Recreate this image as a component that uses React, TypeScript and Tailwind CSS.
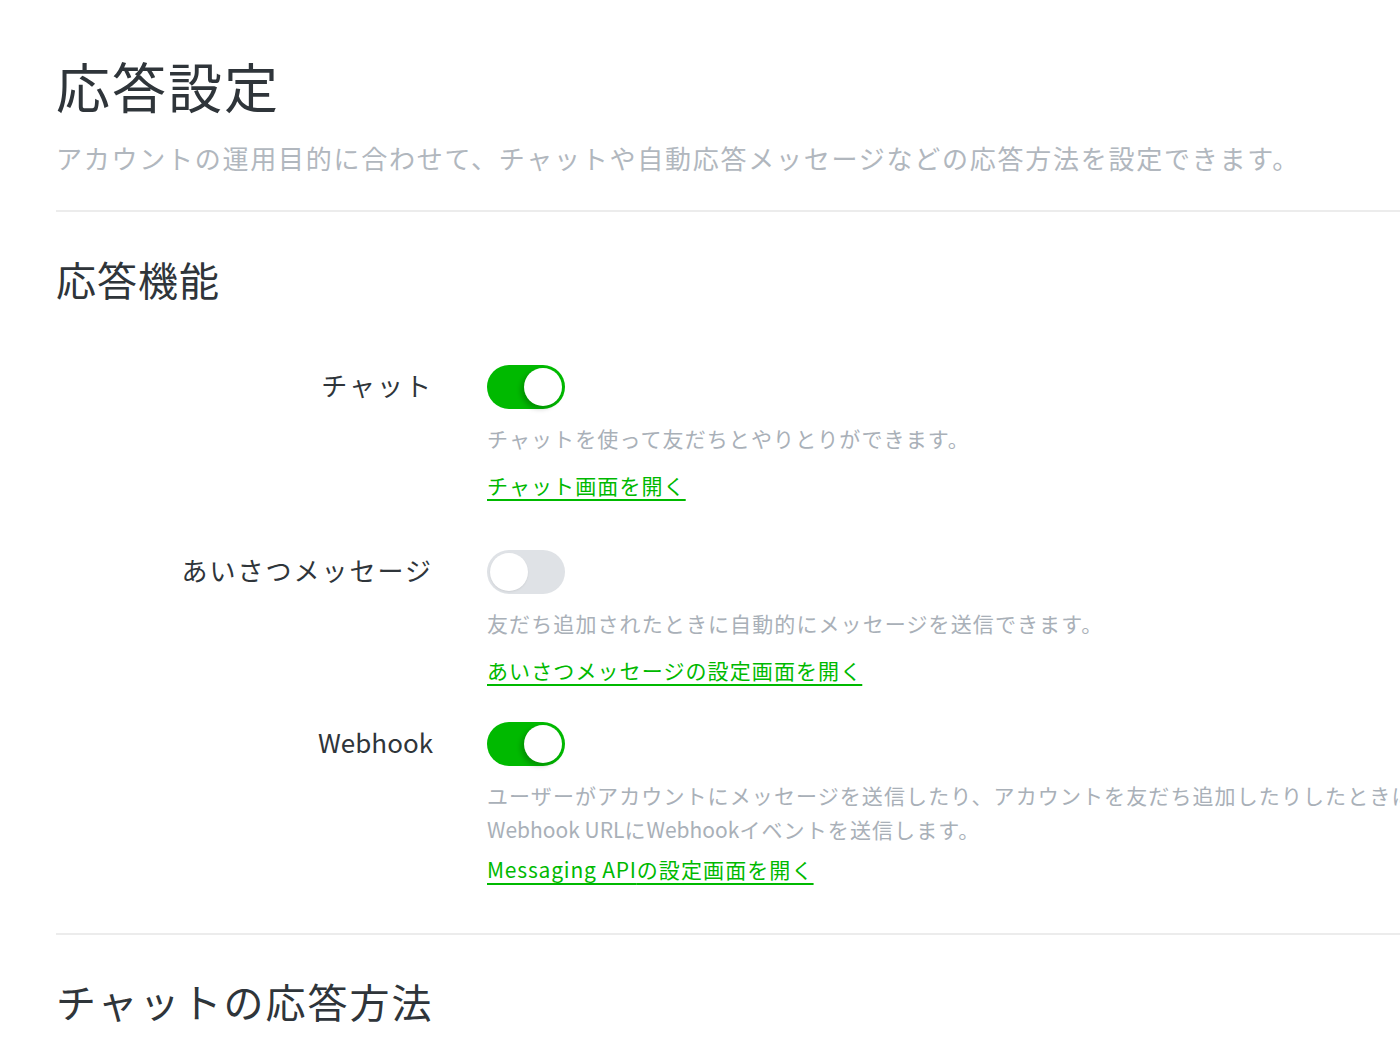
import React, { useState } from "react";

const font = {
  fontFamily: '"Noto Sans CJK JP", "Noto Sans", sans-serif',
};

type Feature = {
  label: string;
  labelClass: string;
  on: boolean;
  desc: React.ReactNode;
  link: React.ReactNode;
  rowClass: string;
  linkClass: string;
};

const Toggle = ({ on, onClick }: { on: boolean; onClick: () => void }) => (
  <button
    onClick={onClick}
    className={`relative block w-[78px] h-[44px] rounded-full transition-colors ${
      on ? "bg-[#00b900]" : "bg-[#dfe2e6]"
    }`}
    aria-pressed={on}
  >
    <span
      className={`absolute top-[3px] w-[38px] h-[38px] rounded-full bg-white transition-all ${
        on
          ? "left-[37px] shadow-[-3px_3px_5px_rgba(0,0,0,0.22)]"
          : "left-[3px] shadow-[0_1px_2px_rgba(0,0,0,0.08)]"
      }`}
    />
  </button>
);

const App = () => {
  const [features, setFeatures] = useState<Feature[]>([
    {
      label: "チャット",
      labelClass: "tracking-[2px]",
      on: true,
      desc: "チャットを使って友だちとやりとりができます。",
      link: "チャット画面を開く",
      rowClass: "mb-[48px]",
      linkClass: "mt-[13px]",
    },
    {
      label: "あいさつメッセージ",
      labelClass: "tracking-[2px]",
      on: false,
      desc: "友だち追加されたときに自動的にメッセージを送信できます。",
      link: "あいさつメッセージの設定画面を開く",
      rowClass: "mb-[35px]",
      linkClass: "mt-[13px]",
    },
    {
      label: "Webhook",
      labelClass: "tracking-normal",
      on: true,
      desc: (
        <>
          ユーザーがアカウントにメッセージを送信したり、アカウントを友だち追加したりしたときに、
          <br />
          <span className="tracking-normal">Webhook URL</span>に
          <span className="tracking-normal">Webhook</span>イベントを送信します。
        </>
      ),
      link: (
        <>
          <span className="tracking-[0.8px]">Messaging API</span>の設定画面を開く
        </>
      ),
      rowClass: "mb-[47px]",
      linkClass: "mt-[6px]",
    },
  ]);

  const toggle = (i: number) =>
    setFeatures((prev) =>
      prev.map((f, idx) => (idx === i ? { ...f, on: !f.on } : f))
    );

  return (
    <div className="w-full h-[1049px] overflow-hidden bg-white" style={font}>
      <div className="w-[1700px] pl-[56px] pt-[54px] text-[#2f353a]">
        {/* Page header */}
        <h1 className="text-[54px] leading-[64px] tracking-[2px] font-normal">
          応答設定
        </h1>
        <p className="mt-[20px] text-[26px] leading-[40px] tracking-[1.75px] text-[#b1b7be]">
          アカウントの運用目的に合わせて、チャットや自動応答メッセージなどの応答方法を設定できます。
        </p>

        <div className="mt-[32px] border-t-2 border-[#ececec]" />

        {/* 応答機能 */}
        <h2 className="mt-[39px] text-[40px] leading-[56px] tracking-[1px] font-normal">
          応答機能
        </h2>

        <div className="mt-[58px]">
          {features.map((f, i) => (
            <div key={f.label} className={`flex ${f.rowClass}`}>
              <div
                className={`w-[377px] shrink-0 text-right text-[26px] leading-[40px] text-[#2f353a] ${f.labelClass}`}
              >
                {f.label}
              </div>
              <div className="pl-[54px]">
                <Toggle on={f.on} onClick={() => toggle(i)} />
                <p className="mt-[12px] text-[21px] leading-[34px] tracking-[1.1px] text-[#a9b0b8] whitespace-nowrap">
                  {f.desc}
                </p>
                <a
                  href="#"
                  className={`block ${f.linkClass} text-[21px] leading-[34px] tracking-[1.1px] text-[#00b900] underline underline-offset-[5px] decoration-[1.5px] w-fit`}
                >
                  {f.link}
                </a>
              </div>
            </div>
          ))}
        </div>

        <div className="border-t-2 border-[#ececec]" />

        {/* チャットの応答方法 */}
        <h2 className="mt-[38px] text-[40px] leading-[56px] tracking-[2px] font-normal">
          チャットの応答方法
        </h2>
      </div>
    </div>
  );
};

export default App;
